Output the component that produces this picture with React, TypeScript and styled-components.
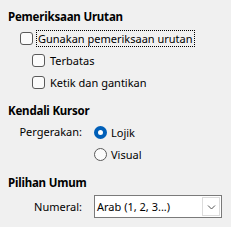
import styled, { createGlobalStyle } from "styled-components";

const GlobalStyle = createGlobalStyle`
  html, body {
    margin: 0;
    padding: 0;
    background: #f0f0f0;
  }
  body {
    font-family: "Noto Sans", "Open Sans", sans-serif;
    font-size: 11px;
    color: #000;
  }
`;

const Page = styled.div`
  width: 231px;
  height: 227px;
  padding: 7px 8px 0;
  box-sizing: border-box;
  overflow: hidden;
`;

const Section = styled.section`
  & + & {
    margin-top: 8px;
  }
`;

const Title = styled.div`
  font-weight: 700;
  font-size: 11.5px;
  letter-spacing: -0.2px;
  line-height: 20px;
  height: 20px;
`;

const CheckRow = styled.label<{ $indent: number }>`
  display: flex;
  align-items: center;
  height: 22px;
  padding-left: ${(p) => p.$indent}px;
  gap: 3px;
`;

const Box = styled.span`
  width: 13px;
  height: 13px;
  box-sizing: border-box;
  border: 1px solid #5a5a5a;
  border-radius: 3px;
  background: #fbfbfb;
  flex: none;
`;

const Caption = styled.span<{ $focused?: boolean }>`
  padding: 0 1px;
  line-height: 15px;
  border: 1px dotted ${(p) => (p.$focused ? "#000" : "transparent")};
`;

const FormGrid = styled.div`
  display: grid;
  grid-template-columns: 74px auto;
  column-gap: 12px;
  align-items: center;
`;

const FieldLabel = styled.div<{ $top?: boolean }>`
  text-align: right;
  line-height: 22px;
  align-self: ${(p) => (p.$top ? "start" : "center")};
`;

const RadioList = styled.div`
  display: flex;
  flex-direction: column;
`;

const RadioRow = styled.label`
  display: flex;
  align-items: center;
  gap: 4px;
  height: 22px;
`;

const Radio = styled.span<{ $checked?: boolean }>`
  width: 13px;
  height: 13px;
  box-sizing: border-box;
  border-radius: 50%;
  flex: none;
  background: ${(p) => (p.$checked ? "#fff" : "#fbfbfb")};
  border: ${(p) => (p.$checked ? "4px solid #005fb8" : "1px solid #5a5a5a")};
`;

const SelectRow = styled(FormGrid)`
  margin-top: 2px;
`;

const Select = styled.div`
  display: flex;
  align-items: stretch;
  width: 128px;
  height: 23px;
  box-sizing: border-box;
  border: 1px solid #7a7a7a;
  background: #fff;
`;

const SelectValue = styled.div`
  flex: 1;
  padding-left: 2px;
  line-height: 21px;
  white-space: nowrap;
`;

const DropButton = styled.div`
  width: 16px;
  margin: 1px;
  border: 1px solid #dcdcdc;
  display: flex;
  align-items: center;
  justify-content: center;
`;

function Chevron() {
  return (
    <svg width="9" height="6" viewBox="0 0 9 6">
      <path d="M1 1.5 L4.5 5 L8 1.5" fill="none" stroke="#555" strokeWidth="1" />
    </svg>
  );
}

export default function App() {
  return (
    <>
      <GlobalStyle />
      <Page>
        <Section>
          <Title>Pemeriksaan Urutan</Title>
          <CheckRow $indent={12}>
            <Box />
            <Caption $focused>Gunakan pemeriksaan urutan</Caption>
          </CheckRow>
          <CheckRow $indent={24}>
            <Box />
            <Caption>Terbatas</Caption>
          </CheckRow>
          <CheckRow $indent={24}>
            <Box />
            <Caption>Ketik dan gantikan</Caption>
          </CheckRow>
        </Section>

        <Section>
          <Title>Kendali Kursor</Title>
          <FormGrid>
            <FieldLabel $top>Pergerakan:</FieldLabel>
            <RadioList>
              <RadioRow>
                <Radio $checked />
                <span>Lojik</span>
              </RadioRow>
              <RadioRow>
                <Radio />
                <span>Visual</span>
              </RadioRow>
            </RadioList>
          </FormGrid>
        </Section>

        <Section>
          <Title>Pilihan Umum</Title>
          <SelectRow>
            <FieldLabel>Numeral:</FieldLabel>
            <Select>
              <SelectValue>Arab (1, 2, 3...)</SelectValue>
              <DropButton>
                <Chevron />
              </DropButton>
            </Select>
          </SelectRow>
        </Section>
      </Page>
    </>
  );
}
